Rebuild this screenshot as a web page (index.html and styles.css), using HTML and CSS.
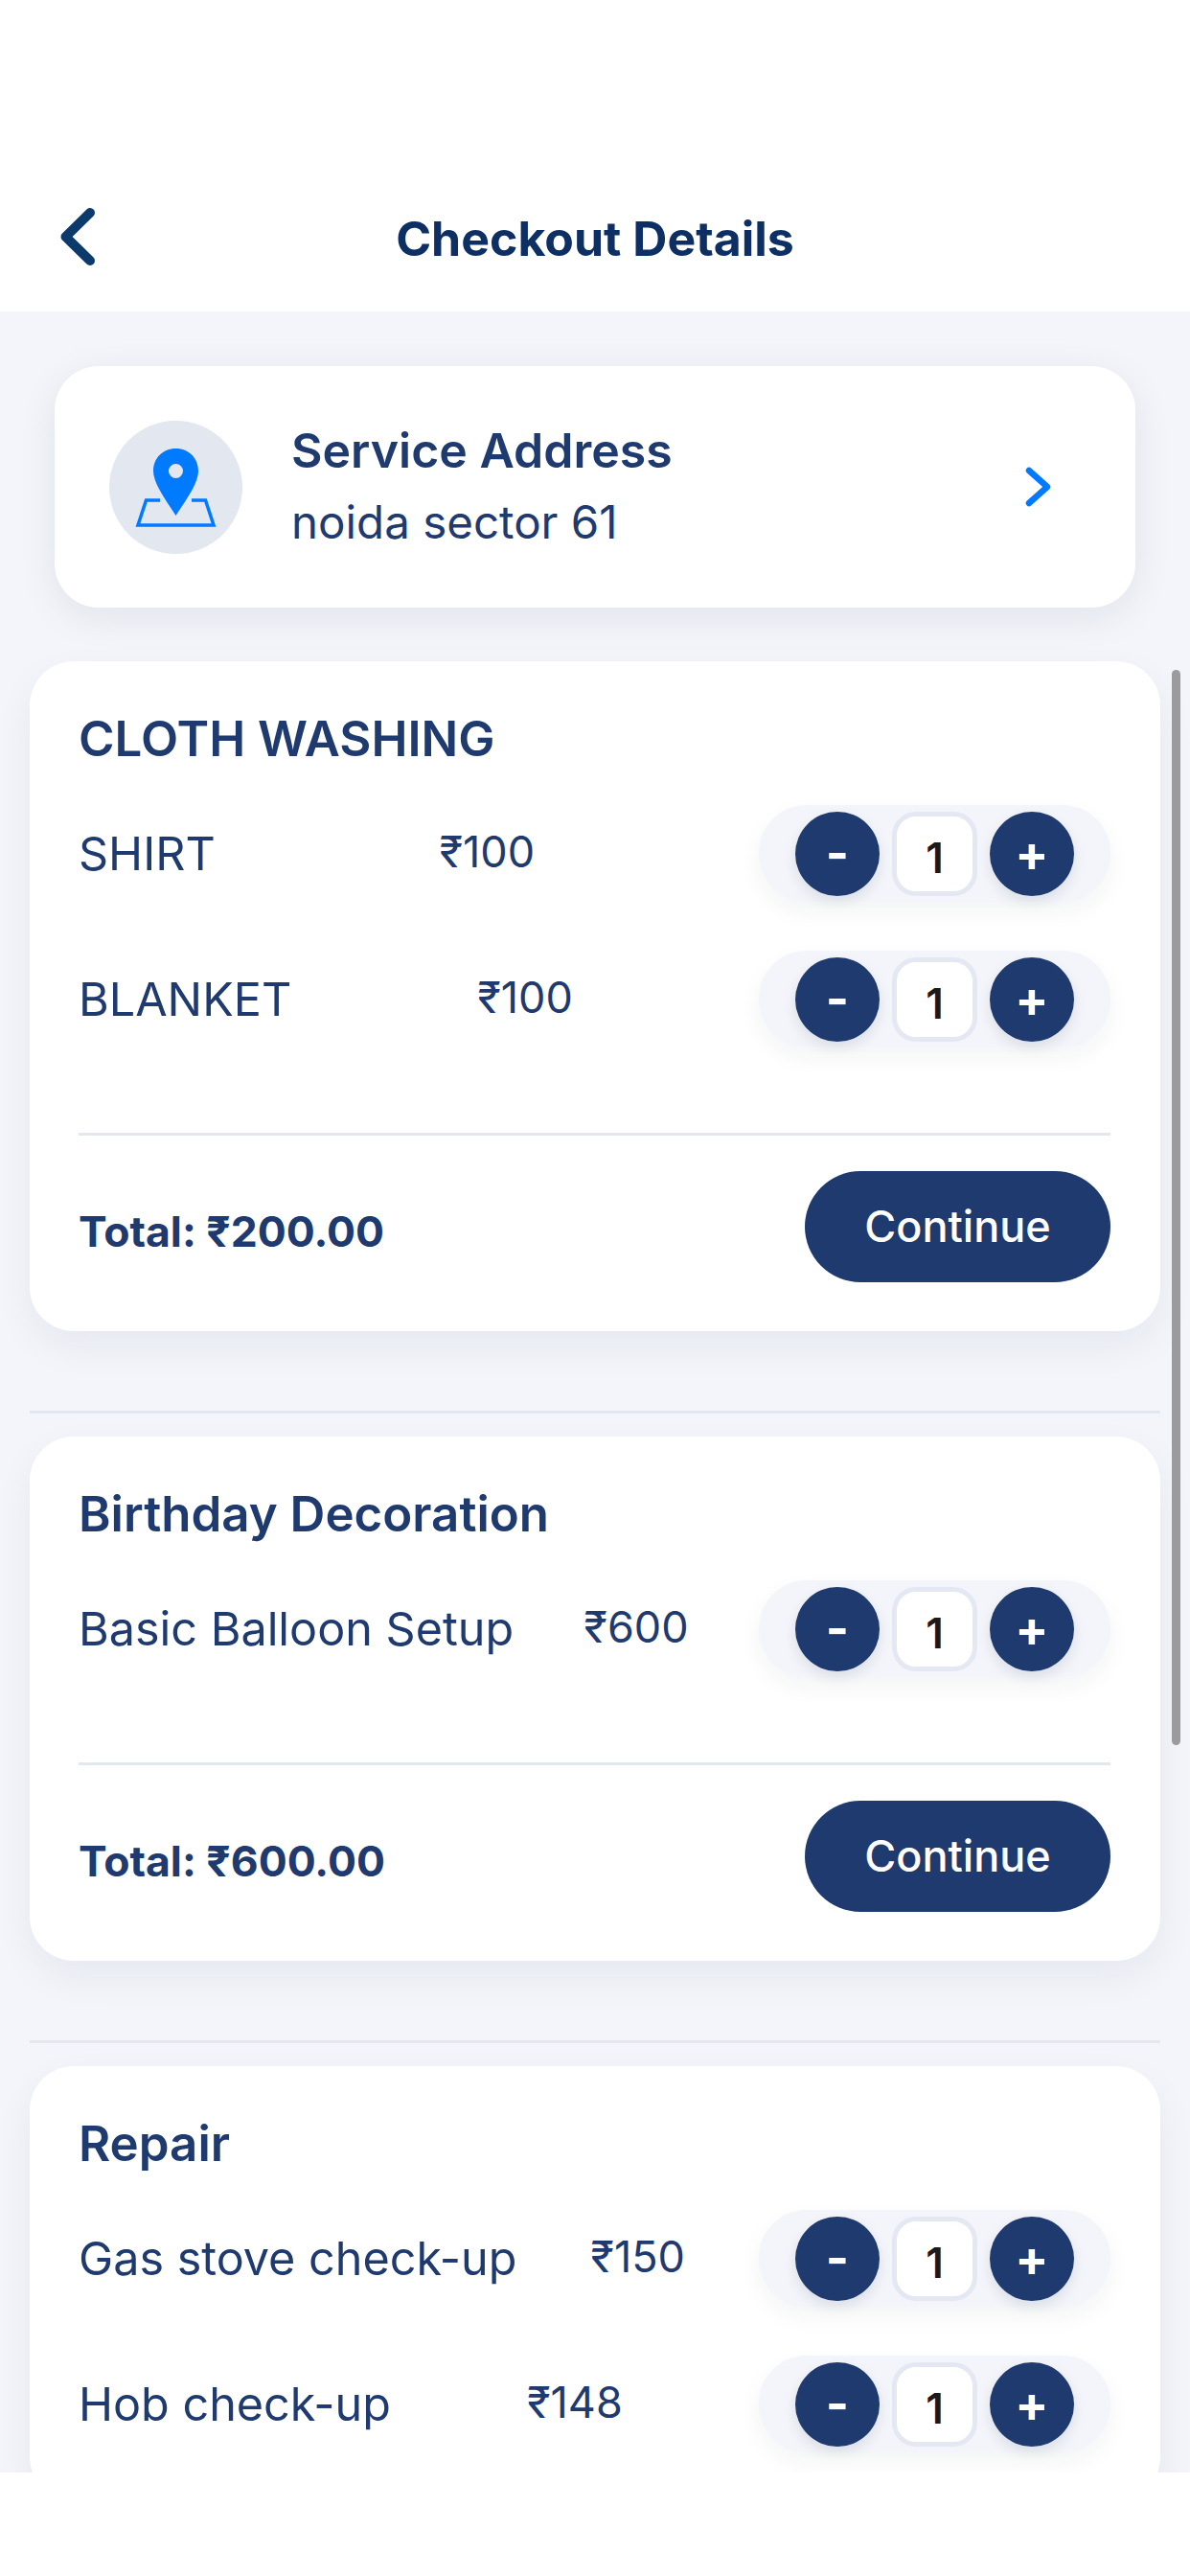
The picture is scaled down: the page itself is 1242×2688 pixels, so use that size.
FILE: index.html
```html
<!doctype html>
<html>
<head>
	<meta charset="UTF-8">
	<meta name="viewport" content="width=device-width, initial-scale=1.0">
	<title>Checkout Details</title>
	<link rel="stylesheet" href="styles.css">
</head>
<body>
	<div class="app">
		<header class="topbar">
			<svg class="back" viewBox="0 0 36 60" width="36" height="60">
				<path d="M31 5 L5.500 30 L31 55" fill="none" stroke="#0b3a6b" stroke-width="10" stroke-linecap="round" stroke-linejoin="round"/>
			</svg>
			<h1>Checkout Details</h1>
		</header>

		<main class="content">
			<section class="address">
				<div class="address-icon">
					<svg viewBox="0 0 139 139" width="139" height="139">
						<path d="M53 83 H38.500 L30 109 H109 L100.500 83 H86" fill="none" stroke="#007aff" stroke-width="3.500"/>
						<path fill-rule="evenodd" fill="#007aff" d="M69.500 29 C56 29 46 39 46 52.500 C46 66 60 84 69.500 99 C79 84 93 66 93 52.500 C93 39 83 29 69.500 29 Z M69.500 45 A7.500 7.500 0 1 1 69.500 60 A7.500 7.500 0 1 1 69.500 45 Z"/>
					</svg>
				</div>
				<div class="address-text">
					<h2>Service Address</h2>
					<p>noida sector 61</p>
				</div>
				<svg class="go" viewBox="0 0 28 42" width="28" height="42">
					<path d="M4 4 L23 21 L4 38" fill="none" stroke="#007aff" stroke-width="6.500" stroke-linecap="round" stroke-linejoin="round"/>
				</svg>
			</section>

			<section class="card">
				<h3>CLOTH WASHING</h3>
				<div class="rows">
					<div class="row">
						<span class="name">SHIRT</span>
						<span class="price">₹100</span>
						<div class="stepper"><button>-</button><span class="qty">1</span><button>+</button></div>
					</div>
					<div class="row">
						<span class="name">BLANKET</span>
						<span class="price">₹100</span>
						<div class="stepper"><button>-</button><span class="qty">1</span><button>+</button></div>
					</div>
				</div>
				<div class="card-foot">
					<span class="total">Total: ₹200.00</span>
					<button class="continue">Continue</button>
				</div>
			</section>
			<hr class="sep">

			<section class="card">
				<h3>Birthday Decoration</h3>
				<div class="rows">
					<div class="row">
						<span class="name">Basic Balloon Setup</span>
						<span class="price">₹600</span>
						<div class="stepper"><button>-</button><span class="qty">1</span><button>+</button></div>
					</div>
				</div>
				<div class="card-foot">
					<span class="total">Total: ₹600.00</span>
					<button class="continue">Continue</button>
				</div>
			</section>
			<hr class="sep">

			<section class="card">
				<h3>Repair</h3>
				<div class="rows">
					<div class="row">
						<span class="name">Gas stove check-up</span>
						<span class="price">₹150</span>
						<div class="stepper"><button>-</button><span class="qty">1</span><button>+</button></div>
					</div>
					<div class="row">
						<span class="name">Hob check-up</span>
						<span class="price">₹148</span>
						<div class="stepper"><button>-</button><span class="qty">1</span><button>+</button></div>
					</div>
				</div>
			</section>

			<div class="scrollbar"></div>
		</main>
	</div>
</body>
</html>
```

FILE: styles.css
```css
* {
	padding: 0;
	margin: 0;
	box-sizing: border-box;
}
body {
	background-color: #fff;
	font-family: Inter, "Noto Sans", sans-serif;
	color: #1f3a6e;
}
.app {
	width: 1242px;
	height: 2688px;
	overflow: hidden;
}
.topbar {
	height: 325px;
	padding: 187px 0 0 63px;
	display: flex;
	align-items: flex-start;
	background-color: #fff;
}
.topbar .back {
	margin-top: 30px;
	flex: none;
}
.topbar h1 {
	flex: 1;
	margin-left: -99px;
	padding-top: 32px;
	text-align: center;
	font-size: 50px;
	line-height: 60px;
	font-weight: 700;
	color: #0d2f63;
}
.content {
	position: relative;
	height: 2255px;
	padding-top: 57px;
	overflow: hidden;
	background-color: #f3f5fa;
}
.address {
	height: 252px;
	margin: 0 57px 56px;
	padding: 0 87px 0 57px;
	display: flex;
	align-items: center;
	background-color: #fff;
	border-radius: 46px;
	box-shadow: 0 10px 40px rgba(20, 30, 60, 0.08);
}
.address-icon {
	width: 139px;
	height: 139px;
	flex: none;
	border-radius: 50%;
	background-color: #e2e7f0;
}
.address-icon svg {
	display: block;
}
.address-text {
	flex: 1;
	margin-left: 51px;
}
.address-text h2 {
	margin-top: -2px;
	font-size: 50px;
	line-height: 60px;
	font-weight: 600;
}
.address-text p {
	margin-top: 15px;
	font-size: 47.500px;
	line-height: 60px;
	font-weight: 400;
}
.go {
	flex: none;
}
.card {
	margin: 0 31px;
	padding: 51px 52px 51px 51px;
	background-color: #fff;
	border-radius: 46px;
	box-shadow: 0 16px 40px rgba(20, 30, 60, 0.06);
}
.card h3 {
	font-size: 51px;
	line-height: 60px;
	font-weight: 600;
	margin-bottom: 39px;
}
.rows {
	display: flex;
	flex-direction: column;
	gap: 51px;
}
.row {
	display: flex;
	align-items: center;
	justify-content: space-between;
}
.name {
	font-size: 48.500px;
	font-weight: 400;
}
.price {
	font-size: 45px;
	font-weight: 400;
	padding-bottom: 4px;
}
.stepper {
	width: 367px;
	height: 101px;
	padding: 0 38px;
	display: flex;
	align-items: center;
	justify-content: space-between;
	background-color: #f3f5fa;
	border-radius: 50px;
	box-shadow: 0 10px 24px rgba(20, 30, 60, 0.05);
}
.stepper button {
	width: 88px;
	height: 88px;
	border: none;
	border-radius: 50%;
	background-color: #1f3a6e;
	color: #fff;
	font-family: Inter, sans-serif;
	font-size: 52px;
	font-weight: 700;
	box-shadow: 0 6px 14px rgba(20, 30, 60, 0.1);
}
.qty {
	width: 89px;
	height: 88px;
	display: flex;
	align-items: center;
	justify-content: center;
	padding-top: 8px;
	background-color: #fff;
	border: 5px solid #e3e8f2;
	border-radius: 25px;
	font-size: 44px;
	font-weight: 600;
	color: #1a1a1a;
}
.card-foot {
	margin-top: 89px;
	padding-top: 37px;
	border-top: 3px solid #e3e8f0;
	display: flex;
	align-items: center;
	justify-content: space-between;
}
.total {
	padding-top: 10px;
	font-size: 44.500px;
	font-weight: 700;
}
.continue {
	width: 319px;
	height: 116px;
	padding-bottom: 2px;
	border: none;
	border-radius: 58px;
	background-color: #1f3a6e;
	color: #fff;
	font-family: Inter, sans-serif;
	font-size: 45px;
	font-weight: 500;
}
.sep {
	margin: 83px 31px 24px;
	border: none;
	border-top: 3px solid #e3e8f0;
}
.scrollbar {
	position: absolute;
	top: 374px;
	right: 10px;
	width: 9px;
	height: 1122px;
	border-radius: 5px;
	background-color: #9b9b9f;
}
```
